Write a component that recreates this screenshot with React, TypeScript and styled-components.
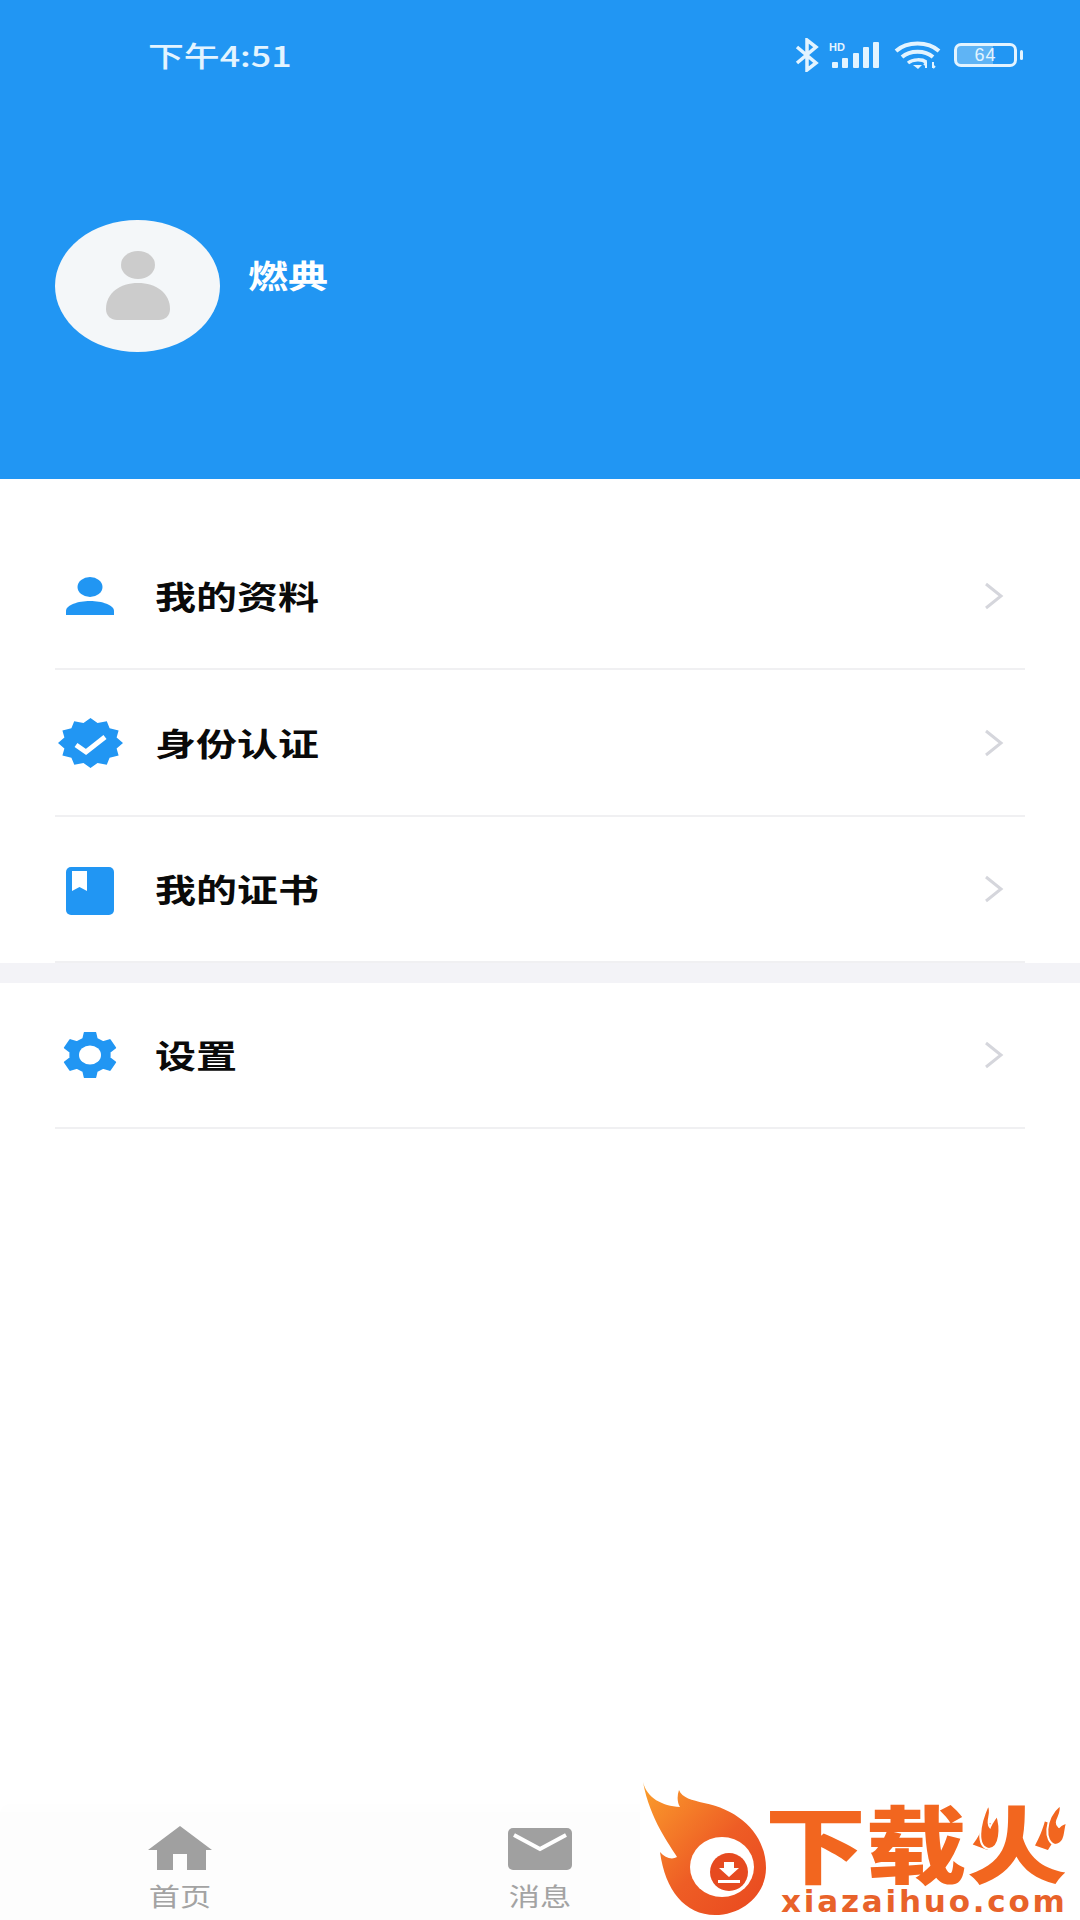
import React from 'react';
import styled, { createGlobalStyle } from 'styled-components';

const GlobalStyle = createGlobalStyle`
  html, body {
    margin: 0;
    padding: 0;
    background: #ffffff;
  }
  * {
    box-sizing: border-box;
  }
`;

const Page = styled.div`
  position: relative;
  width: 1080px;
  height: 1920px;
  overflow: hidden;
  display: flex;
  flex-direction: column;
  background: #ffffff;
  font-family: 'Noto Sans CJK SC', 'Noto Sans', sans-serif;
`;

const Header = styled.header`
  height: 479px;
  background: #2196f3;
  display: flex;
  flex-direction: column;
`;

const StatusBar = styled.div`
  height: 110px;
  padding: 0 57px 0 148px;
  display: flex;
  align-items: center;
  justify-content: space-between;
  color: #e3f4ff;
`;

const Time = styled.span`
  display: inline-block;
  font-size: 28px;
  font-weight: 500;
  line-height: 36px;
  transform: scaleX(1.28);
  transform-origin: left center;
`;

const StatusIcons = styled.div`
  display: flex;
  align-items: center;
  gap: 12px;
`;

const SignalGroup = styled.svg`
  margin-left: -3px;
`;

const WifiGroup = styled.svg`
  margin: 0 1px 0 3px;
`;

const Battery = styled.div`
  position: relative;
  width: 63px;
  height: 24px;
  margin-right: 6px;
  border: 3px solid #e3f4ff;
  border-radius: 7px;
  display: flex;
  align-items: center;
  justify-content: center;
  color: #e3f4ff;
  font-family: 'Liberation Sans', sans-serif;
  font-size: 18px;
  letter-spacing: 1px;
  background: linear-gradient(90deg, #5fb4f5 64%, transparent 64%);

  &::after {
    content: '';
    position: absolute;
    right: -9px;
    top: 4px;
    width: 3px;
    height: 10px;
    border-radius: 2px;
    background: #e3f4ff;
  }
`;

const Profile = styled.div`
  margin-top: 110px;
  padding-left: 55px;
  display: flex;
  gap: 29px;
`;

const Avatar = styled.div`
  width: 165px;
  height: 132px;
  border-radius: 50%;
  background: #f4f7f9;
  display: flex;
  align-items: center;
  justify-content: center;
`;

const UserName = styled.span`
  display: inline-block;
  margin-top: 30px;
  margin-left: -1px;
  color: #ffffff;
  font-size: 32px;
  font-weight: 700;
  line-height: 48px;
  transform: scaleX(1.25);
  transform-origin: left center;
`;

const Menu = styled.section<{ $top: number }>`
  padding: ${({ $top }) => $top}px 55px 0 55px;
`;

const Row = styled.div<{ $height: number; $line?: boolean }>`
  height: ${({ $height }) => $height}px;
  display: flex;
  align-items: center;
  border-bottom: 2px solid ${({ $line }) => ($line ? '#f0f0f2' : 'transparent')};
`;

const IconSlot = styled.div`
  width: 70px;
  margin-right: 30px;
  display: flex;
  justify-content: center;
  align-items: center;
`;

const RowLabel = styled.span`
  flex: 1;
  margin-top: -2px;
  color: #0a0a0a;
  font-size: 32px;
  font-weight: 700;
  line-height: 44px;
  transform: scaleX(1.28);
  transform-origin: left center;
`;

const Chevron = styled.svg`
  margin-right: 21px;
`;

const Band = styled.div`
  height: 20px;
  background: #f3f3f7;
`;

const TabBar = styled.nav`
  margin-top: auto;
  height: 108px;
  padding-top: 12px;
  background: #fdfdfd;
  box-shadow: 0 -8px 10px rgba(0, 0, 0, 0.006);
  display: grid;
  grid-template-columns: repeat(3, 1fr);
`;

const Tab = styled.div`
  display: flex;
  flex-direction: column;
  align-items: center;
  color: #a3a3a3;
`;

const TabIcon = styled.div`
  height: 46px;
  display: flex;
  align-items: flex-end;
`;

const TabLabel = styled.span`
  margin-top: 7px;
  font-size: 25px;
  line-height: 36px;
  transform: scaleX(1.25);
`;

const Watermark = styled.div`
  position: absolute;
  right: 0;
  bottom: 0;
  width: 440px;
  height: 140px;
  background: #ffffff;
`;

const FlameLogo = styled.svg`
  position: absolute;
  left: 0;
  top: 0;
`;

const BrandName = styled.span`
  position: absolute;
  left: 125px;
  top: 21px;
  color: #f2661f;
  font-size: 84px;
  font-weight: 900;
  line-height: 80px;
  white-space: nowrap;
  transform: scaleX(1.2);
  transform-origin: left top;
`;

const BrandUrl = styled.span`
  position: absolute;
  left: 141px;
  top: 102px;
  color: #e8622a;
  font-family: 'DejaVu Sans', sans-serif;
  font-size: 31px;
  font-weight: 700;
  line-height: 38px;
  letter-spacing: 2.8px;
  white-space: nowrap;
`;

const BrandFlames = styled.svg`
  position: absolute;
  left: 0;
  top: 0;
`;

const badgePoints = () => {
  const pts: string[] = [];
  for (let i = 0; i < 24; i++) {
    const a = (i * Math.PI) / 12;
    const r = i % 2 === 0 ? 1 : 0.83;
    pts.push(`${(32.5 + 32.5 * r * Math.cos(a)).toFixed(1)},${(25 + 25 * r * Math.sin(a)).toFixed(1)}`);
  }
  return pts.join(' ');
};

const gearPoints = () => {
  const pts: string[] = [];
  for (let i = 0; i < 6; i++) {
    const c = (i * Math.PI) / 3 + Math.PI / 2;
    const offs: [number, number][] = [
      [-0.34, 0.74],
      [-0.2, 0.98],
      [0.2, 0.98],
      [0.34, 0.74],
    ];
    offs.forEach(([d, r]) => {
      pts.push(`${(27 + 27 * r * Math.cos(c + d)).toFixed(1)},${(23 + 23 * r * Math.sin(c + d)).toFixed(1)}`);
    });
  }
  return pts.join(' ');
};

const PersonIcon = () => (
  <svg width="48" height="38" viewBox="0 0 48 38">
    <ellipse cx="24" cy="10" rx="12.5" ry="10" fill="#2196f3" />
    <path d="M0 38v-4C0 28 12 24 24 24s24 4 24 10v4z" fill="#2196f3" />
  </svg>
);

const BadgeIcon = () => (
  <svg width="65" height="50" viewBox="0 0 65 50">
    <polygon points={badgePoints()} fill="#2196f3" />
    <path d="M18 27l10 7 19-15" fill="none" stroke="#fff" strokeWidth="5" />
  </svg>
);

const BookIcon = () => (
  <svg width="48" height="52" viewBox="0 -4 48 52">
    <rect width="48" height="48" rx="5" fill="#2196f3" />
    <path d="M6 4h15v20l-7.500-4-7.500 4z" fill="#fff" />
  </svg>
);

const GearIcon = () => (
  <svg width="54" height="46" viewBox="0 0 54 46">
    <polygon points={gearPoints()} fill="#2196f3" stroke="#2196f3" strokeWidth="2" strokeLinejoin="round" />
    <ellipse cx="27" cy="23" rx="11" ry="9.500" fill="#fff" />
  </svg>
);

const RowChevron = () => (
  <Chevron width="20" height="28" viewBox="0 0 20 28">
    <path d="M2 2l15 12L2 26" fill="none" stroke="#d5d6dc" strokeWidth="3" />
  </Chevron>
);

const rows = [
  { label: '我的资料', icon: <PersonIcon /> },
  { label: '身份认证', icon: <BadgeIcon /> },
  { label: '我的证书', icon: <BookIcon /> },
];

const App: React.FC = () => (
  <Page>
    <GlobalStyle />
    <Header>
      <StatusBar>
        <Time>下午4:51</Time>
        <StatusIcons>
          <svg width="26" height="34" viewBox="0 0 26 34">
            <path d="M3 9l19 16-9 7V2l9 7L3 25" fill="none" stroke="#e3f4ff" strokeWidth="3.500" />
          </svg>
          <SignalGroup width="50" height="27" viewBox="0 0 50 27">
            <text x="0" y="9" fontFamily="Liberation Sans" fontWeight="700" fontSize="11" fill="#e3f4ff">HD</text>
            <rect x="3" y="20" width="6" height="6" rx="1" fill="#e3f4ff" />
            <rect x="13" y="16" width="6" height="10" rx="1" fill="#e3f4ff" />
            <rect x="24" y="11" width="6" height="15" rx="1" fill="#e3f4ff" />
            <rect x="34" y="5" width="6" height="21" rx="1" fill="#e3f4ff" />
            <rect x="44" y="0" width="6" height="26" rx="1" fill="#e3f4ff" />
          </SignalGroup>
          <WifiGroup width="47" height="28" viewBox="0 0 47 28">
            <path d="M2 10C13 0 34 0 45 10" fill="none" stroke="#e3f4ff" strokeWidth="4" />
            <path d="M8 16C16 9 31 9 39 16" fill="none" stroke="#e3f4ff" strokeWidth="4" />
            <path d="M14 22C19 18 28 18 32 21" fill="none" stroke="#e3f4ff" strokeWidth="3.500" />
            <path d="M19 24h9l-4 4z" fill="#e3f4ff" />
            <path d="M32 27v-5l-2 2M39 21v6M39 27l2-2" fill="none" stroke="#e3f4ff" strokeWidth="2" />
          </WifiGroup>
          <Battery>64</Battery>
        </StatusIcons>
      </StatusBar>
      <Profile>
        <Avatar>
          <svg width="66" height="70" viewBox="0 0 66 70">
            <ellipse cx="33" cy="14" rx="17" ry="14" fill="#cccccc" />
            <path d="M1 58C1 42 15 32 33 32s32 10 32 26c0 7-5 11-11 11H12C6 69 1 65 1 58z" fill="#cccccc" />
          </svg>
        </Avatar>
        <UserName>燃典</UserName>
      </Profile>
    </Header>

    <Menu $top={44}>
      {rows.map((row, i) => (
        <Row key={row.label} $height={i === 2 ? 146 : 147} $line={true}>
          <IconSlot>{row.icon}</IconSlot>
          <RowLabel>{row.label}</RowLabel>
          <RowChevron />
        </Row>
      ))}
    </Menu>
    <Band />
    <Menu $top={0}>
      <Row $height={146} $line={true}>
        <IconSlot>
          <GearIcon />
        </IconSlot>
        <RowLabel>设置</RowLabel>
        <RowChevron />
      </Row>
    </Menu>

    <TabBar>
      <Tab>
        <TabIcon>
          <svg width="64" height="44" viewBox="0 0 64 44">
            <path d="M32 0l32 24h-6v20H39V28H25v16H9V24H0z" fill="#a0a0a0" />
          </svg>
        </TabIcon>
        <TabLabel>首页</TabLabel>
      </Tab>
      <Tab>
        <TabIcon>
          <svg width="64" height="42" viewBox="0 0 64 42">
            <rect width="64" height="42" rx="5" fill="#a0a0a0" />
            <path d="M6 7l26 14 26-14" fill="none" stroke="#fff" strokeWidth="4" />
          </svg>
        </TabIcon>
        <TabLabel>消息</TabLabel>
      </Tab>
    </TabBar>

    <Watermark>
      <FlameLogo width="440" height="140" viewBox="20 20 440 140">
        <defs>
          <linearGradient id="flame" x1="0" y1="0" x2="1" y2="1">
            <stop offset="0" stopColor="#fb9f2c" />
            <stop offset="0.55" stopColor="#ee5d25" />
            <stop offset="1" stopColor="#e9481f" />
          </linearGradient>
        </defs>
        <path
          d="M23 22C27 38 42 46 60 47 57 42 57 36 59 30 62 38 72 40 84 43 120 50 146 75 146 108 146 135 122 155 95 155 65 155 45 130 40 92 45 98 52 100 57 97 50 85 30 60 23 22Z"
          fill="url(#flame)"
        />
        <ellipse cx="102" cy="107" rx="32" ry="30" fill="#fff" />
        <circle cx="109" cy="112" r="19" fill="#e64a20" />
        <path d="M104 102h10v6h5l-10 9-10-9h5z" fill="#fff" />
        <rect x="98" y="120" width="22" height="3" fill="#fff" />
      </FlameLogo>
      <BrandName>下载火</BrandName>
      <BrandUrl>xiazaihuo.com</BrandUrl>
      <BrandFlames width="440" height="140" viewBox="20 20 440 140">
        <path d="M368 45c6 8-3 16 2 22 2-5 5-8 7-12 4 12 4 33-8 34-13-2-10-24-1-44z" fill="#f2661f" stroke="#fff" strokeWidth="2" />
        <path d="M440 45c4 10-8 16-1 22 3-3 6-4 8-4-3 8 0 20-12 22-11-3-11-26 5-40z" fill="#f2661f" stroke="#fff" strokeWidth="2" />
      </BrandFlames>
    </Watermark>
  </Page>
);

export default App;
